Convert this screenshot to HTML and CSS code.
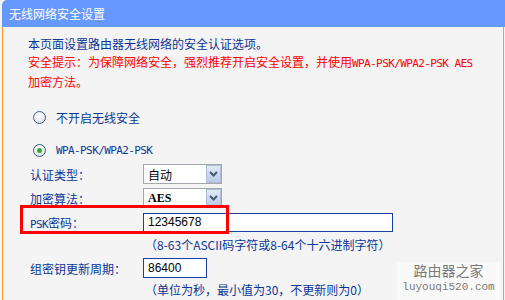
FILE: index.html
```html
<!DOCTYPE html>
<html lang="zh-CN">
<head>
  <meta charset="UTF-8" />
  <meta name="viewport" content="width=device-width, initial-scale=1.0"/>
  <title>无线网络安全设置</title>
  <link rel="stylesheet" href="styles.css">
</head>
<body>

  <div class="panel">
    <div class="panel-title">无线网络安全设置</div>

    <div class="panel-body">
      <p class="intro">本页面设置路由器无线网络的安全认证选项。</p>
      <p class="warn">安全提示：为保障网络安全，强烈推荐开启安全设置，并使用<span class="mono">WPA-PSK/WPA2-PSK AES</span><br>加密方法。</p>

      <!-- Security mode -->
      <div class="radio-row"><span class="radio"></span>不开启无线安全</div>
      <div class="radio-row second"><span class="radio checked"></span><span class="mono">WPA-PSK/WPA2-PSK</span></div>

      <div class="fields">
        <div class="field">
          <label>认证类型：</label>
          <div class="select">
            <span class="select-text">自动</span>
            <span class="arrow"><svg width="9" height="6" viewBox="0 0 9 6"><path d="M1 1 L4.5 4.5 L8 1" fill="none" stroke="#4b5873" stroke-width="2"/></svg></span>
          </div>
        </div>
        <div class="field">
          <label>加密算法：</label>
          <div class="select">
            <span class="select-text latin">AES</span>
            <span class="arrow"><svg width="9" height="6" viewBox="0 0 9 6"><path d="M1 1 L4.5 4.5 L8 1" fill="none" stroke="#4b5873" stroke-width="2"/></svg></span>
          </div>
        </div>
        <div class="field">
          <label><span class="mono">PSK</span>密码：</label>
          <input type="text" class="text-input wide" value="12345678" />
          <div class="highlight"></div>
        </div>
        <div class="hint first">（8-63个ASCII码字符或8-64个十六进制字符）</div>
        <div class="field">
          <label>组密钥更新周期：</label>
          <input type="text" class="text-input short" value="86400" />
        </div>
        <div class="hint">（单位为秒，最小值为30，不更新则为0）</div>
      </div>
    </div>

    <!-- watermark -->
    <div class="watermark">
      <div class="wm-name">路由器之家</div>
      <div class="wm-url">luyouqi520.com</div>
    </div>
  </div>

</body>
</html>
```

FILE: styles.css
```css
body {
  margin: 0;
  background: #f4f4f4;
  font-family: "Noto Sans CJK SC", sans-serif;
  font-size: 12px;
  color: #0b3696;
}

.panel {
  position: relative;
  margin-left: 2px;
  width: 503px;
  height: 300px;
  overflow: hidden;
}

.panel-title {
  height: 27px;
  line-height: 27px;
  background: #6699ff;
  color: #fff;
  padding-left: 7px;
  border-top-left-radius: 5px;
}

.panel-body {
  box-sizing: border-box;
  width: 502px;
  height: 273px;
  padding: 8px 0 0 25px;
  border-left: 1px solid #ff9933;
  border-right: 1px solid #ff9933;
}

.intro, .warn {
  margin: 0;
  line-height: 18px;
}

.warn {
  color: #ff0000;
}

.mono {
  font-family: "DejaVu Sans Mono", monospace;
  font-size: 11px;
  letter-spacing: -0.6px;
}

.radio-row {
  display: flex;
  align-items: center;
  gap: 10px;
  height: 20px;
  margin: 16px 0 0 5px;
}

.radio-row.second {
  margin-top: 13px;
}

.radio {
  box-sizing: border-box;
  width: 13px;
  height: 13px;
  border: 1px solid #3d5f88;
  border-radius: 50%;
  background: radial-gradient(circle at 40% 35%, #ffffff 0%, #f0f0f0 45%, #c9ced6 100%);
  display: flex;
  align-items: center;
  justify-content: center;
}

.radio.checked::after {
  content: "";
  width: 5px;
  height: 5px;
  border-radius: 50%;
  background: #2fae2f;
}

.fields {
  margin-top: 2px;
}

.field {
  position: relative;
  display: flex;
  align-items: center;
  height: 24px;
  padding-left: 2px;
}

.field label {
  width: 113px;
  flex-shrink: 0;
}

.select {
  box-sizing: border-box;
  width: 79px;
  height: 20px;
  display: flex;
  align-items: center;
  background: #fff;
  border: 1px solid #a3a8b0;
  color: #000;
}

.select-text {
  padding-left: 4px;
}

.select-text.latin {
  font-family: "Liberation Serif", serif;
  font-weight: bold;
  font-size: 12px;
}

.arrow {
  box-sizing: border-box;
  margin-left: auto;
  width: 15px;
  height: 18px;
  display: flex;
  align-items: center;
  justify-content: center;
  background: linear-gradient(#e3ebf7, #b8cae6);
  border: 1px solid #a9bcd9;
}

.text-input {
  box-sizing: border-box;
  height: 20px;
  padding: 0 4px;
  margin: 0;
  border: 1px solid #1f3f9f;
  background: #fff;
  color: #000;
  font-family: "Liberation Sans", sans-serif;
  font-size: 12px;
  outline: none;
}

.text-input.wide {
  width: 250px;
  height: 19px;
}

.text-input.short {
  width: 64px;
}

.highlight {
  position: absolute;
  left: -8px;
  top: -5px;
  box-sizing: border-box;
  width: 209px;
  height: 29px;
  border: 3px solid #ff0000;
  pointer-events: none;
}

.hint {
  height: 20px;
  line-height: 20px;
  padding-left: 117px;
}

.hint.first {
  height: 22px;
  line-height: 22px;
}

.watermark {
  position: absolute;
  left: 395px;
  top: 262px;
  width: 103px;
  height: 38px;
  background: #f9f9f9;
  color: #7a7a7a;
  text-align: center;
}

.wm-name {
  font-size: 14px;
  line-height: 16px;
}

.wm-url {
  margin-top: 3px;
  font-family: "Liberation Mono", monospace;
  font-size: 11px;
  line-height: 12px;
}
```
